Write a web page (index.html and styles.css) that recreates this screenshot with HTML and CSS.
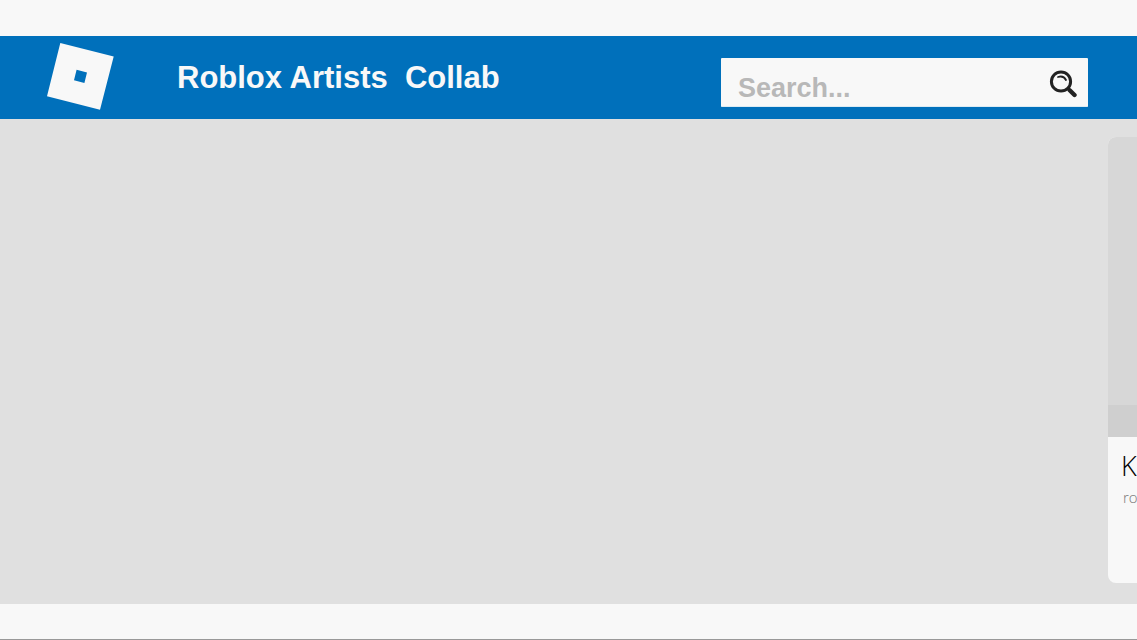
FILE: index.html
```
<!DOCTYPE html>
<html lang="en">

<head>
  <meta charset="UTF-8">
  <meta name="viewport" content="width=device-width, initial-scale=1.0">
  <title>Roblox Artists Collab</title>
  <link rel="stylesheet" href="styles.css">
</head>

<body>
  <header class="navbar">
    <a href="#" class="logo" aria-label="Home">
      <svg width="68" height="68" viewBox="0 0 68 68">
        <path fill="#f8f8f8" fill-rule="evenodd" d="M14.3 1L67.7 14.5L54 67.8L1 54.2ZM30.6 27.8L28 38.3L38.4 41.1L41 30.6Z" />
      </svg>
    </a>
    <h1 class="title">Roblox Artists&nbsp; Collab</h1>
    <form class="search">
      <input type="text" class="search-input" placeholder="Search..." aria-label="Search">
      <button type="button" class="search-button" aria-label="Search">
        <svg width="28" height="28" viewBox="0 0 28 28" fill="none" stroke="#222" stroke-linecap="round">
          <circle cx="12" cy="11.5" r="9.6" stroke-width="3" />
          <path d="M9 7Q14.5 5.2 17 10" stroke-width="1.8" />
          <path d="M19 18.5L20.5 20" stroke-width="3" />
          <path d="M20.7 20.3L25.5 25" stroke-width="4.4" />
        </svg>
      </button>
    </form>
  </header>

  <main class="cards">
    <article class="card">
      <div class="card-image">
        <div class="card-bar"></div>
      </div>
      <div class="card-text">
        <h2 class="card-name">K</h2>
        <p class="card-game">ro</p>
      </div>
    </article>
  </main>

  <footer class="footer"></footer>
</body>

</html>
```

FILE: styles.css
```
* {
  box-sizing: border-box;
}

body {
  display: flex;
  flex-direction: column;
  min-height: 100vh;
  margin: 0;
  padding-top: 36px;
  background-color: #f8f8f8;
  font-family: "Arial Rounded MT Bold", "Liberation Sans", Arial, sans-serif;
}

.navbar {
  display: flex;
  align-items: center;
  padding: 6px 49px 9px 46px;
  background-color: #0070bb;
}

.logo {
  display: flex;
  margin-right: 63px;
}

.title {
  margin: 0;
  padding-top: 4px;
  color: #f8f8f8;
  font-size: 31px;
  line-height: 36px;
  white-space: nowrap;
}

.search {
  display: flex;
  align-items: center;
  width: 367px;
  height: 49px;
  margin-top: 12px;
  margin-left: auto;
  padding-right: 11px;
  background-color: #f8f8f8;
  border-bottom: 1px solid #dcebf3;
  border-radius: 1px;
}

.search-input {
  flex: 1;
  min-width: 0;
  height: 48px;
  padding: 14px 0 0 17px;
  border: 0;
  outline: 0;
  background: none;
  font-family: inherit;
  font-size: 27px;
  font-weight: bold;
}

.search-input::placeholder {
  color: #b8b8b8;
  opacity: 1;
}

.search-button {
  display: flex;
  padding: 5px 0 0;
  border: 0;
  background: none;
  cursor: pointer;
}

.cards {
  flex: 1;
  padding: 18px 0 21px calc(100% - 29px);
  background-color: #e0e0e0;
  overflow: hidden;
}

.card {
  width: 268px;
  background-color: #f8f8f8;
  border-radius: 8px;
  overflow: hidden;
}

.card-image {
  display: flex;
  align-items: flex-end;
  height: 300px;
  background-color: #d7d7d7;
}

.card-bar {
  width: 100%;
  height: 32px;
  background-color: #cfcfcf;
}

.card-text {
  height: 146px;
  padding: 11px 13px;
  font-family: "Open Sans", sans-serif;
  font-weight: 300;
}

.card-name {
  margin: 0;
  color: #000;
  font-size: 27px;
  font-weight: 300;
  line-height: 36px;
}

.card-game {
  margin: 0;
  padding-left: 2px;
  color: #777;
  font-size: 15px;
  line-height: 26px;
}

.footer {
  height: 36px;
  border-bottom: 1px solid #999;
}
```
